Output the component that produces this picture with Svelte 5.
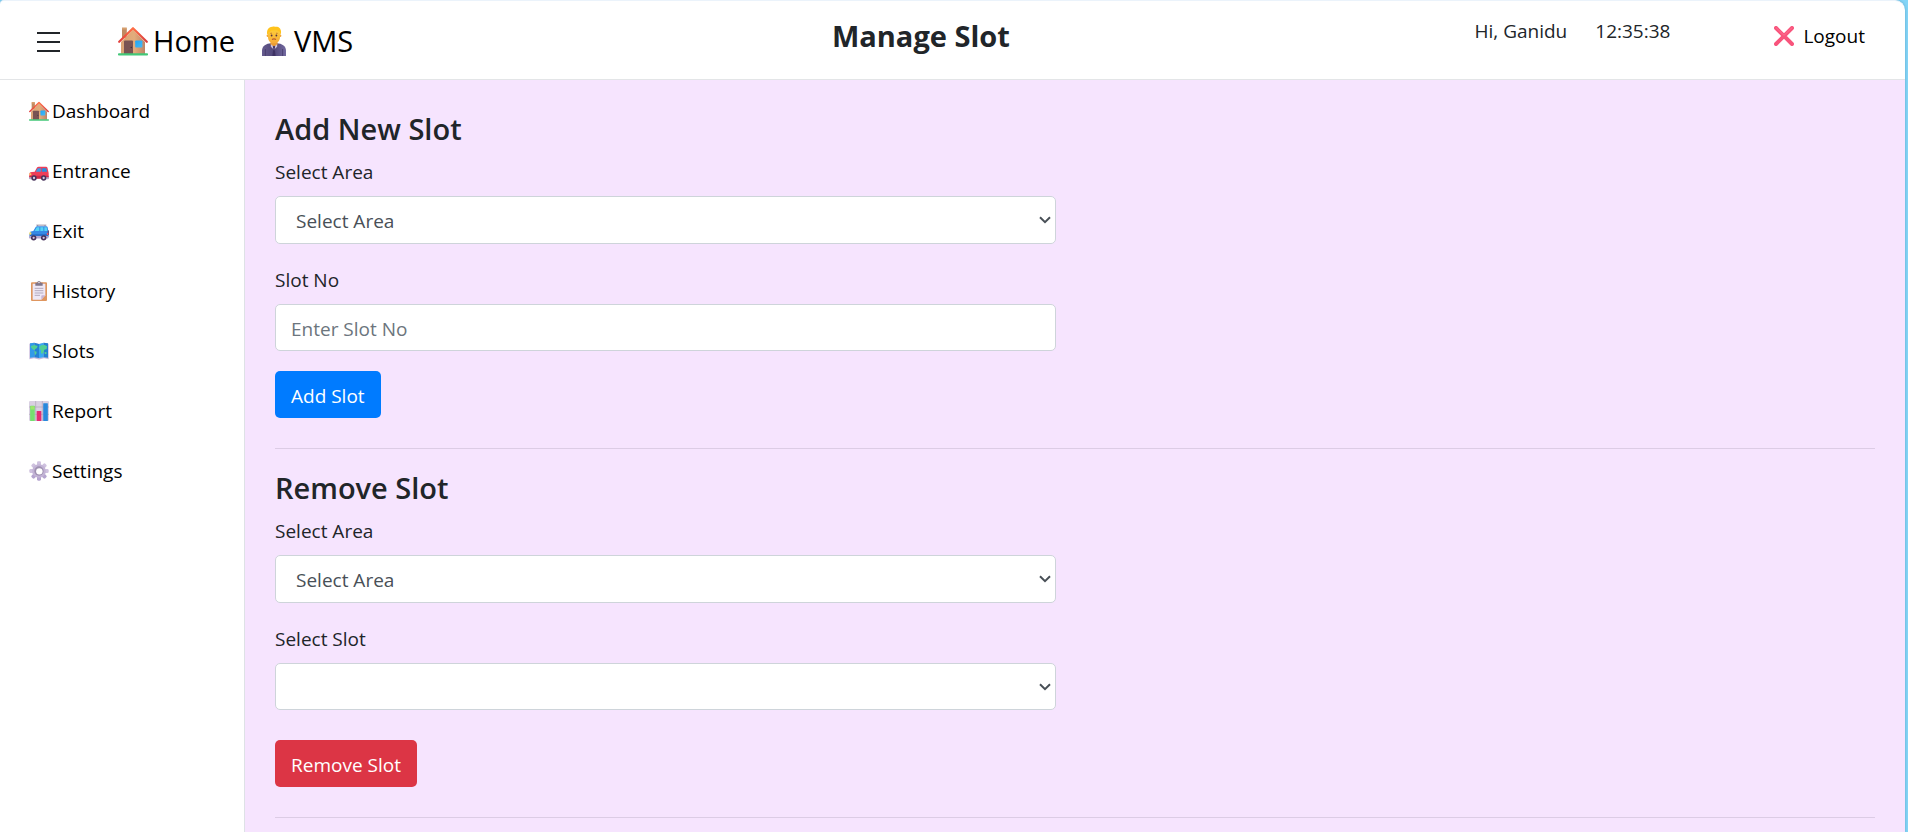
<script>
  const links = [
    { icon: 'house', label: 'Dashboard' },
    { icon: 'car', label: 'Entrance' },
    { icon: 'suv', label: 'Exit' },
    { icon: 'clipboard', label: 'History' },
    { icon: 'map', label: 'Slots' },
    { icon: 'chart', label: 'Report' },
    { icon: 'gear', label: 'Settings' }
  ];
  const teeth = [0, 45, 90, 135, 180, 225, 270, 315];
  let slotNo = $state('');
</script>

{#snippet icon(name)}
  <svg class="icon" viewBox="0 0 30 30" aria-hidden="true">
    {#if name === 'house'}
      <defs>
        <linearGradient id="wall" x1="0" x2="1"><stop offset="0" stop-color="#d9a376" /><stop offset="0.55" stop-color="#e3ac7b" /><stop offset="1" stop-color="#bd8568" /></linearGradient>
        <linearGradient id="roof" x1="0" x2="1"><stop offset="0" stop-color="#e23f3c" /><stop offset="0.5" stop-color="#ff7046" /><stop offset="1" stop-color="#d93b3b" /></linearGradient>
        <linearGradient id="pane" x1="0" x2="1" y2="1"><stop offset="0" stop-color="#20a5f5" /><stop offset="1" stop-color="#48b9f4" /></linearGradient>
      </defs>
      <path d="M4 2.6h4.8V12H4z" fill="#c08a62" />
      <path d="M4 1.6h4.8v2H4z" fill="#d6a06f" />
      <path d="M15 3.5 27 16v12H3V16z" fill="url(#wall)" />
      <path d="M1.2 15.8 15 2.2l13.8 13.6" fill="none" stroke="url(#roof)" stroke-width="2.2" stroke-linecap="round" stroke-linejoin="round" />
      <path d="M6 15.5a1 1 0 0 1 1-1h7a1 1 0 0 1 1 1V28H6z" fill="#795353" />
      <circle cx="13.3" cy="21.5" r="0.8" fill="#43303c" />
      <rect x="17.2" y="14.4" width="7.2" height="7.2" rx="0.8" fill="url(#pane)" />
      <rect x="0" y="27.2" width="30" height="2.3" rx="0.9" fill="#43c878" />
    {:else if name === 'person'}
      <defs>
        <linearGradient id="face" x1="0" y1="0" x2="0" y2="1"><stop offset="0" stop-color="#ffd338" /><stop offset="1" stop-color="#f5aa39" /></linearGradient>
        <linearGradient id="suit" x1="0" x2="1"><stop offset="0" stop-color="#655b8e" /><stop offset="0.5" stop-color="#514779" /><stop offset="1" stop-color="#736aa0" /></linearGradient>
      </defs>
      <path d="M3 30v-5.500c0-4.400 4.400-7.100 9-7.300h6c4.600.2 9 2.900 9 7.300V30z" fill="url(#suit)" />
      <path d="M11.500 15h7v4L15 23l-3.500-4z" fill="#e99c35" />
      <path d="M12 18.200 15 21l3-2.800.2 2.600-2 1.600L15 30l-1.200-7.600-2-1.600z" fill="#c9c2de" />
      <path d="m13.800 20.500 1.200-.8 1.200.8-.5 2 .9 7.500h-3.200l.9-7.500z" fill="#3e3264" />
      <path d="M6.400 23v7M23.600 23v7" stroke="#463b6b" stroke-width="0.8" />
      <circle cx="8.900" cy="9.800" r="1.300" fill="#f0a43a" />
      <circle cx="21.100" cy="9.800" r="1.300" fill="#f0a43a" />
      <path d="M9 7.500C9 3 11.500 1.500 15 1.500s6 1.500 6 6v3.500c0 4-2.700 6.300-6 6.300S9 15 9 11z" fill="url(#face)" />
      <path d="M8.400 9c-1.300-4 1-8.300 5-8.200C15 0 16.500 1 18 .8c3.500.5 5 4.500 3.600 8.200l-1-3-2.600-1.800-5.400.3-3 2.100z" fill="#ffc31c" />
      <path d="M11.300 7.400 13 7.200M17 7.200l1.700.2" stroke="#b96d2b" stroke-width="0.8" />
      <circle cx="12.600" cy="9.500" r="0.9" fill="#503044" />
      <circle cx="17.400" cy="9.500" r="0.9" fill="#503044" />
      <path d="M13.300 13.200q1.700-.8 3.400 0" fill="none" stroke="#ad472a" stroke-width="1" stroke-linecap="round" />
    {:else if name === 'car'}
      <g transform="translate(0 4)">
        <path d="M8.500 12 12 5.800Q12.800 4.500 14.500 4.500h11q1.800 0 2.200 1.800L29.500 14v6.500q0 1.500-1.500 1.500H2q-1.500 0-1.500-1.500V16q0-3.500 4-3.500z" fill="#ef3e58" />
        <path d="m10 12.300 3.200-5.600h4.500v5.600z" fill="#3f9ee7" />
        <path d="M19.200 6.700h6.500l1.600 5.600h-8.100z" fill="#268ddd" />
        <path d="M.5 18h29v3q0 1.500-1.500 1.500H2Q.5 22.500.5 21z" fill="#cd2847" />
        <rect x="0.500" y="14.500" width="3" height="3" rx="1" fill="#ffd05c" />
        <path d="M0 20.500h7v2.800H1.500Q0 23.300 0 22zM23 20.500h7V22q0 1.300-1.500 1.300H23z" fill="#b7a8cb" />
        <circle cx="7.500" cy="21.500" r="4" fill="#49345c" /><circle cx="7.500" cy="21.500" r="1.700" fill="#d4c8e0" />
        <circle cx="22" cy="21.500" r="4" fill="#49345c" /><circle cx="22" cy="21.500" r="1.700" fill="#d4c8e0" />
      </g>
    {:else if name === 'suv'}
      <g transform="translate(0 3)">
        <path d="M11 3.200h15M13 3v2M24 3v2" stroke="#8b8299" stroke-width="1.300" />
        <path d="M6.500 12 10 6q.6-1.300 2-1.300h14q1.500 0 2 1.500L29 12v9.500H1V15.500Q1 12.700 4.500 12.500z" fill="#3689e5" />
        <path d="M8.500 12 11.600 6.500h3.900V12zM17 6.500h4.500V12H17zM23 6.500h3.500L27.700 12H23z" fill="#55d4f5" />
        <path d="M1 16.500h28v5H1z" fill="#2870cb" />
        <rect x="0.500" y="14" width="3" height="3.500" rx="1" fill="#ffe15b" />
        <rect x="28" y="11" width="2" height="7.500" rx="1" fill="#634b78" />
        <rect x="26.800" y="15" width="2" height="3" fill="#f05262" />
        <rect x="0" y="19.500" width="29" height="3.700" rx="1.200" fill="#b5a6cf" />
        <circle cx="7" cy="22.300" r="4.100" fill="#49345c" /><circle cx="7" cy="22.300" r="1.700" fill="#d4c8e0" />
        <circle cx="22" cy="22.300" r="4.100" fill="#49345c" /><circle cx="22" cy="22.300" r="1.700" fill="#d4c8e0" />
      </g>
    {:else if name === 'clipboard'}
      <rect x="3" y="2" width="24" height="28" rx="1.500" fill="#df965f" />
      <path d="M5.500 4h19v17.500L18.500 28h-13z" fill="#eee8f6" />
      <path d="M18.500 28v-5.500q0-1 1-1h5z" fill="#c8b5d6" />
      <path d="M9.500 2.500h2.700q.3-2.500 2.800-2.500t2.800 2.500h2.700V7h-11z" fill="#80758a" />
      <circle cx="15" cy="2.300" r="1" fill="#fff" />
      <path d="M8.500 11h13M8.500 14.500h13M8.500 18h13M8.500 21.500h8" stroke="#aaa0b5" stroke-width="1.300" />
    {:else if name === 'map'}
      <path d="m.5 4 7-1.300L15 4.500l7.500-1.800 7 1.300v23.500l-7-1.500-7.500 1.700L7.500 26l-7 1.500z" fill="#c8b9db" />
      <path d="M1.500 3.500 8 2.700v21.500l-6.500 1z" fill="#329ae9" />
      <path d="M8 2.700 15 4.500v21l-7-1.300z" fill="#2381d4" />
      <path d="m15 4.500 7-1.800v21.500l-7 1.300z" fill="#38a8f1" />
      <path d="m22 2.700 6.500.8v21.700l-6.500-1z" fill="#237fd0" />
      <path d="M3 7.500 8 6l5 1.500-1 3-2.500 1.500L8 14l-2.500-1.500L3 9.500zM8 15l3.500 1-.5 3-2 2.500zM15.500 9 18 6.500l5.500-.5 3.500 2-.5 4-3.500 1-1 3-2 3.500-2-1.500v-4l-2-2zM23 17l3-.5.5 2.500-2.500 1z" fill="#51cf93" />
    {:else if name === 'chart'}
      <rect x="0" y="0" width="30" height="30" rx="2" fill="#d9d0e2" />
      <path d="M0 9h30M0 20h30M10 0v30M20 0v30" stroke="#aaa0b2" stroke-width="0.900" />
      <rect x="1.700" y="7" width="7" height="23" rx="0.800" fill="#75df70" />
      <rect x="11.500" y="15" width="7" height="15" rx="0.800" fill="#e52c72" />
      <rect x="21.300" y="3.500" width="7" height="26.500" rx="0.800" fill="#2989dc" />
      <path d="M2.500 7.800h5.400v5H2.500z" fill="#a0e66b" />
    {:else if name === 'gear'}
      {#each teeth as angle}
        <rect x="12" y="0.500" width="6" height="9" rx="2" fill={angle > 90 && angle < 270 ? '#b5a5cf' : '#cfc2df'} transform="rotate({angle} 15 15)" />
      {/each}
      <circle cx="15" cy="15" r="10.300" fill="#c3b4d6" />
      <circle cx="15" cy="15" r="7" fill="#9f91b1" />
      <circle cx="15.500" cy="15.500" r="4.800" fill="#fff" />
    {:else if name === 'cross'}
      <path d="m3 3 24 24M27 3 3 27" stroke="#f8547c" stroke-width="6" stroke-linecap="round" />
      <path d="M3 2.500 15 14 27 2.500" fill="none" stroke="#ff6f90" stroke-width="1.500" stroke-linecap="round" />
    {/if}
  </svg>
{/snippet}

<div class="frame">
  <header>
    <button class="menu" aria-label="Menu">
      <svg viewBox="0 0 24 22" aria-hidden="true"><path d="M1 2h23M1 11h23M1 20h23" stroke="#212529" stroke-width="2" /></svg>
    </button>
    <nav class="brand">
      <a href="#home">{@render icon('house')}<span>Home</span></a>
      <a href="#vms">{@render icon('person')}<span>VMS</span></a>
    </nav>
    <h1>Manage Slot</h1>
    <span class="greeting">Hi, Ganidu</span>
    <time>12:35:38</time>
    <a class="logout" href="#logout">{@render icon('cross')}<span>Logout</span></a>
  </header>

  <div class="body">
    <nav class="sidebar">
      {#each links as link}
        <a href="#{link.label.toLowerCase()}">{@render icon(link.icon)}<span>{link.label}</span></a>
      {/each}
    </nav>

    <main>
      <form class="add" onsubmit={(e) => e.preventDefault()}>
        <h2>Add New Slot</h2>
        <label for="add-area">Select Area</label>
        <select id="add-area" class="area"><option>Select Area</option></select>
        <label for="slot-no">Slot No</label>
        <input id="slot-no" type="text" placeholder="Enter Slot No" bind:value={slotNo} />
        <button class="btn primary">Add Slot</button>
      </form>
      <hr />
      <form class="remove" onsubmit={(e) => e.preventDefault()}>
        <h2>Remove Slot</h2>
        <label for="remove-area">Select Area</label>
        <select id="remove-area" class="area"><option>Select Area</option></select>
        <label for="remove-slot">Select Slot</label>
        <select id="remove-slot"></select>
        <button class="btn danger">Remove Slot</button>
      </form>
      <hr />
    </main>
  </div>
</div>

<style>
  :global(body) {
    margin: 0;
    background: #84d5f7;
  }
  .frame,
  .frame * {
    box-sizing: border-box;
  }
  .frame {
    display: flex;
    flex-direction: column;
    min-height: 100vh;
    margin-right: 3px;
    overflow: hidden;
    border-top: 1px solid #ebf3fb;
    border-radius: 4px 10px 0 0;
    background: #fff;
    box-shadow: 0 0 3px rgba(0, 60, 100, 0.3);
    color: #212529;
    font-family: "Segoe UI", "Open Sans", "Noto Sans", sans-serif;
    font-size: 19px;
    line-height: 30px;
  }
  a {
    color: #000;
    text-decoration: none;
  }
  .icon {
    display: block;
    flex: none;
    width: 20px;
    height: 20px;
  }
  header {
    display: flex;
    align-items: flex-start;
    height: 79px;
    padding: 15px 40px 0 36px;
    border-bottom: 1px solid #e3e5e7;
    white-space: nowrap;
  }
  .menu {
    display: flex;
    align-items: center;
    height: 52px;
    margin-right: 58px;
    padding: 0;
    border: 0;
    background: none;
  }
  .menu svg {
    width: 24px;
    height: 22px;
  }
  .brand {
    display: flex;
    gap: 24px;
    font-size: 29px;
    line-height: 50px;
  }
  .brand a {
    display: flex;
    align-items: center;
    gap: 5px;
  }
  .brand .icon {
    width: 30px;
    height: 30px;
  }
  h1 {
    margin: 0 auto;
    padding-left: 14px;
    font-size: 29px;
    font-weight: 700;
    line-height: 40px;
  }
  time {
    margin: 0 104px 0 28px;
  }
  .logout {
    display: flex;
    align-items: center;
    gap: 9px;
    line-height: 40px;
  }
  .body {
    display: flex;
    flex: 1;
  }
  .sidebar {
    flex: none;
    width: 245px;
    padding-top: 1px;
    border-right: 1px solid #dee2e6;
  }
  .sidebar a {
    display: flex;
    align-items: center;
    gap: 3px;
    padding: 15px 29px;
  }
  main {
    flex: 1;
    padding: 30px 30px 0;
    background: #f6e4fe;
  }
  form {
    display: flex;
    flex-direction: column;
    align-items: flex-start;
    width: calc(50% - 19px);
  }
  h2 {
    margin: 0 0 8px;
    font-size: 29px;
    font-weight: 600;
    line-height: 38px;
  }
  label {
    margin-bottom: 8px;
    line-height: 32px;
  }
  select,
  input {
    width: 100%;
    height: 47px;
    margin: 0 0 20px;
    padding: 2px 15px 0;
    border: 1px solid #ced4da;
    border-radius: 5px;
    background: #fff;
    color: #495057;
    font: inherit;
  }
  select {
    appearance: none;
    padding: 2px 20px 0;
    background: #fff url("data:image/svg+xml,%3Csvg xmlns='http://www.w3.org/2000/svg' width='12' height='8' viewBox='0 0 12 8'%3E%3Cpath d='M1 1.200 6 6.200l5-5' fill='none' stroke='%23495057' stroke-width='2'/%3E%3C/svg%3E") no-repeat right 4px center;
  }
  .area {
    height: 48px;
  }
  input::placeholder {
    color: #6c757d;
    opacity: 1;
  }
  .btn {
    height: 47px;
    padding: 2px 16px 0;
    border: 0;
    border-radius: 5px;
    color: #fff;
    font: inherit;
  }
  .primary {
    background: #007bff;
  }
  .danger {
    margin-top: 10px;
    background: #dc3545;
  }
  hr {
    height: 1px;
    margin: 30px 0 20px;
    border: 0;
    background: #dccce5;
  }
  hr:last-child {
    margin-bottom: 0;
  }
</style>
